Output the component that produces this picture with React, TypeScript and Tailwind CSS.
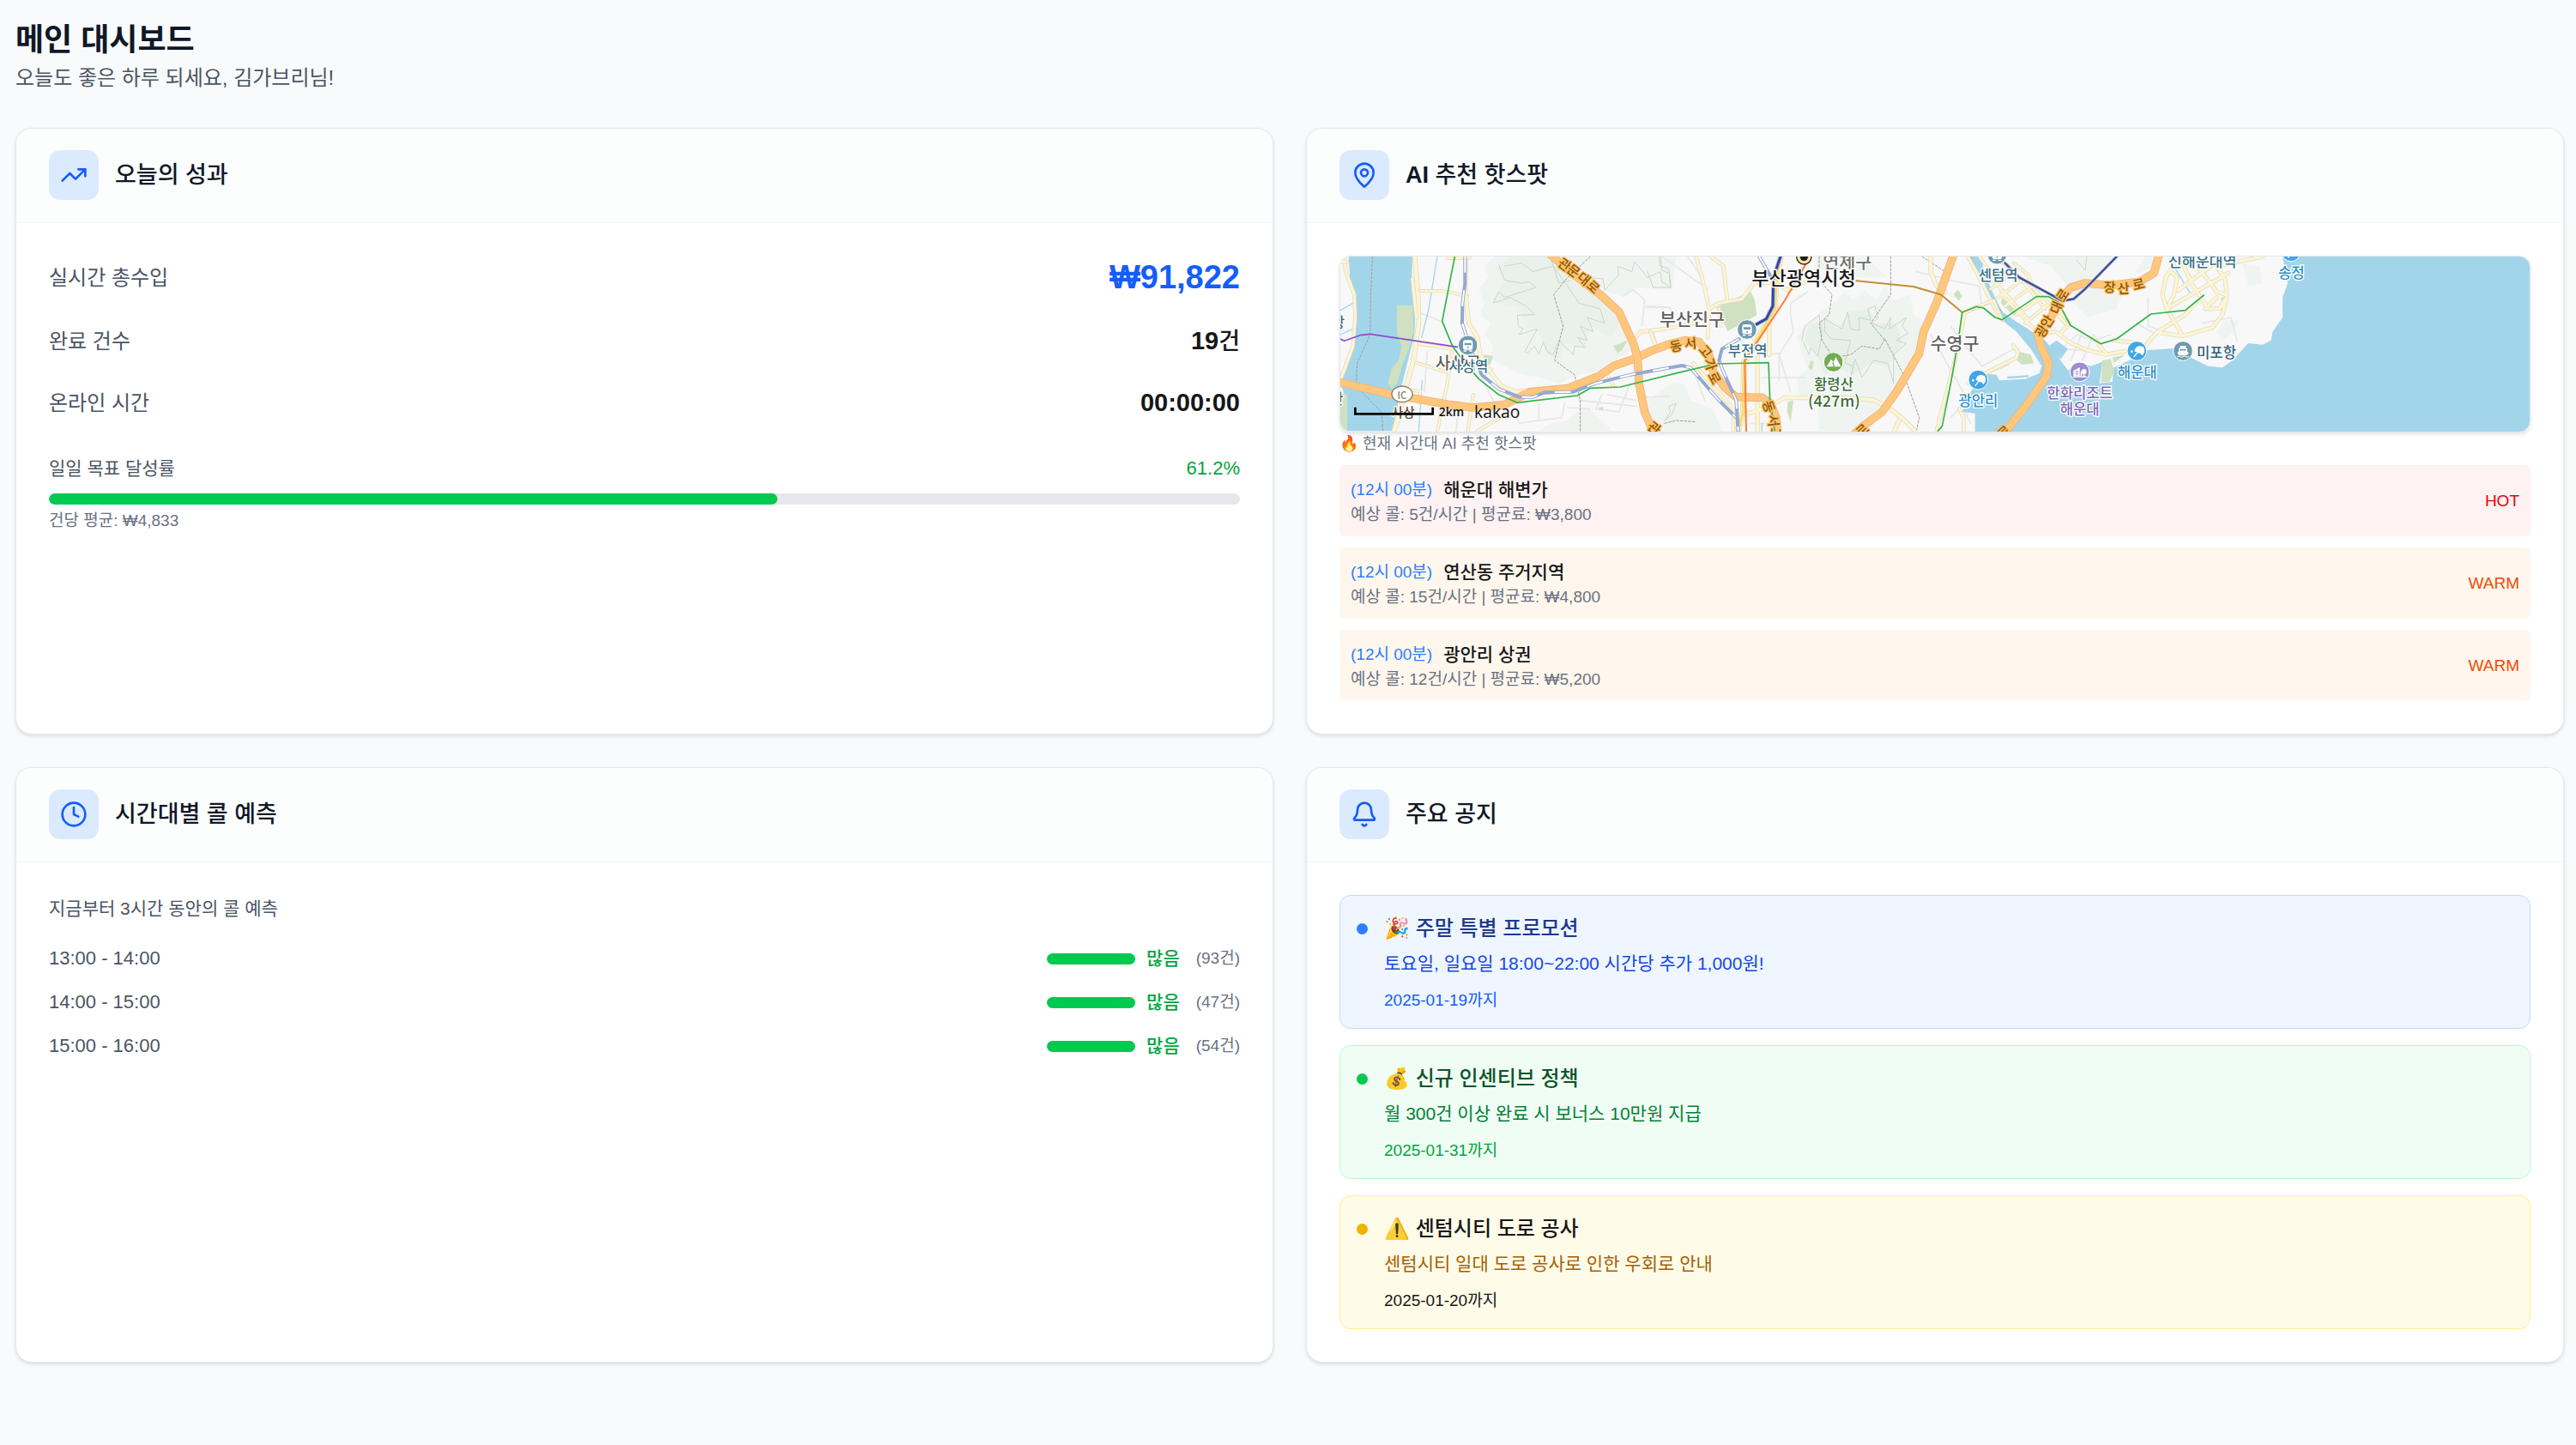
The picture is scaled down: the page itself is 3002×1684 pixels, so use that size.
import type { ReactNode } from "react";
import { Bell, Clock, MapPin, TrendingUp, type LucideIcon } from "lucide-react";

type CardProps = { icon: LucideIcon; title: ReactNode; children: ReactNode };

function Card({ icon: Icon, title, children }: CardProps) {
  return (
    <section className="flex flex-col overflow-hidden rounded-[19px] border border-gray-200 bg-white shadow-[0_2px_4px_rgba(0,0,0,0.12)]">
      <header className="flex items-center gap-[19px] border-b border-gray-100 bg-[#fcfefe] px-[38px] pt-[25px] pb-[26px]">
        <span className="flex size-[58px] items-center justify-center rounded-[13px] bg-blue-100 text-[#155dfc]">
          <Icon size={32} strokeWidth={2} aria-hidden="true" />
        </span>
        <h2 className="text-[27px] leading-[44px] font-medium text-[#101828]">{title}</h2>
      </header>
      <div className="flex-1 p-[38px]">{children}</div>
    </section>
  );
}

function Performance() {
  const percent = 61.2;
  return (
    <Card icon={TrendingUp} title="오늘의 성과">
      <dl className="flex flex-col gap-[26px] text-gray-600">
        <div className="flex items-center justify-between">
          <dt className="text-[24px] leading-[38px]">실시간 총수입</dt>
          <dd className="text-[38px] leading-[51px] font-bold text-[#155dfc]">₩91,822</dd>
        </div>
        <div className="flex items-center justify-between">
          <dt className="text-[24px] leading-[38px]">완료 건수</dt>
          <dd className="text-[29px] leading-[45px] font-semibold text-[#171717]">
            19<span className="text-[27px] font-medium">건</span>
          </dd>
        </div>
        <div className="flex items-center justify-between">
          <dt className="text-[24px] leading-[38px]">온라인 시간</dt>
          <dd className="text-[29px] leading-[45px] font-semibold text-[#171717]">00:00:00</dd>
        </div>
      </dl>
      <div className="mt-[38px] flex items-center justify-between leading-[32px]">
        <span id="goal" className="text-[21px] text-gray-600">일일 목표 달성률</span>
        <span className="text-[22px] text-[#00a63e]">61.2%</span>
      </div>
      <div
        role="progressbar"
        aria-labelledby="goal"
        aria-valuenow={percent}
        className="mt-[13px] h-[13px] overflow-hidden rounded-full bg-gray-200"
      >
        <div className="h-full rounded-full bg-[#00c950]" style={{ width: `${percent}%` }} />
      </div>
      <p className="mt-[6px] text-[19px] leading-[26px] text-gray-500">건당 평균: ₩4,833</p>
    </Card>
  );
}

type RoadProps = { d: string; w?: number };

function Road({ d, w = 12 }: RoadProps) {
  return (
    <>
      <path d={d} stroke="#ded8be" strokeWidth={w + 4} />
      <path d={d} stroke="#fdf4d3" strokeWidth={w} />
    </>
  );
}

function Highway({ d, w = 24 }: RoadProps) {
  return (
    <>
      <path d={d} stroke="#f0b184" strokeWidth={w + 5} />
      <path d={d} stroke="#ffc77c" strokeWidth={w} />
    </>
  );
}

function Rail({ d }: RoadProps) {
  return (
    <>
      <path d={d} stroke="#94a9d2" strokeWidth={12} />
      <path d={d} stroke="#ffffff" strokeWidth={6} strokeDasharray="56 62" strokeLinecap="butt" />
    </>
  );
}

type LabelProps = {
  x: number;
  y: number;
  size?: number;
  fill: string;
  halo?: string;
  rotate?: number;
  weight?: number;
  children: string;
};

function Label({ x, y, size = 50, fill, halo = "#ffffff", rotate = 0, weight = 500, children }: LabelProps) {
  return (
    <text
      x={x}
      y={y}
      fontSize={size}
      fill={fill}
      fontWeight={weight}
      stroke={halo}
      strokeWidth={8}
      strokeLinejoin="round"
      paintOrder="stroke"
      textAnchor="middle"
      dominantBaseline="central"
      transform={rotate ? `rotate(${rotate} ${x} ${y})` : undefined}
    >
      {children}
    </text>
  );
}

const roadNames: [string, number, number, number][] = [
  ["관", 852, 82, 36],
  ["문", 884, 104, 38],
  ["대", 920, 132, 40],
  ["로", 952, 160, 42],
  ["동", 1238, 366, -12],
  ["서", 1290, 356, -4],
  ["고", 1346, 386, 50],
  ["가", 1364, 432, 72],
  ["로", 1378, 480, 62],
  ["관", 1166, 654, 40],
  ["동", 1568, 580, 72],
  ["서", 1584, 630, 84],
  ["고", 1592, 676, 88],
  ["로", 1888, 662, -42],
  ["광", 2514, 316, -58],
  ["안", 2534, 282, -58],
  ["대", 2566, 234, -66],
  ["로", 2588, 190, -58],
  ["장", 2756, 160, 2],
  ["산", 2804, 164, -4],
  ["로", 2856, 150, -14],
  ["로", 2384, 668, -42],
];

function Pin({ x, y, fill, children }: { x: number; y: number; fill: string; children: ReactNode }) {
  return (
    <g transform={`translate(${x} ${y})`}>
      <circle r="34" fill={fill} stroke="#ffffff" strokeWidth="3" />
      {children}
    </g>
  );
}

function Train() {
  return (
    <>
      <path d="M-17-8q0-10 10-10H7q10 0 10 10V8q0 8-8 8H-9q-8 0-8-8Z" fill="#fff" />
      <path d="M-12-8H12V0H-12Z" fill="#7099ae" />
      <circle cy="8" r="3" fill="#7099ae" />
      <path d="M-14 20h8M6 20h8" stroke="#fff" strokeWidth="4" />
    </>
  );
}

function Parasol() {
  return (
    <>
      <path d="M-8 2C-8-14 6-22 22-14C30-4 26 10 18 16L10 6L6 10L4 4Z" fill="#fff" />
      <path d="M6 0L-10 20" stroke="#fff" strokeWidth="4" />
      <circle cx="-18" cy="2" r="4" fill="#fff" />
    </>
  );
}

function HotspotMap() {
  return (
    <svg
      viewBox="66 57 4158 612"
      preserveAspectRatio="xMidYMid slice"
      className="block h-[204px] w-full font-['Noto_Sans_CJK_KR',sans-serif]"
      role="img"
      aria-label="부산 핫스팟 지도"
      fill="none"
      strokeLinejoin="round"
      strokeLinecap="round"
    >
      <rect x="66" y="57" width="4158" height="612" fill="#f8f8f8" />

      {/* Hills and parks */}
      <g fill="#eff4f1">
        <path d="M605 57L570 90L585 130L550 170L570 220L555 260L590 290L570 330L600 370L590 410L640 440L700 470L760 480L830 500L900 470L960 460L1020 420L1080 390L1060 330L1030 260L980 200L920 150L860 100L800 57Z" />
        <path d="M840 57L900 110L1000 180L1060 200L1100 165L1180 170L1225 175L1240 57Z" />
        <path d="M760 667L800 640L850 635L890 600L940 590L990 640L1020 667Z" />
        <path d="M1140 57L1220 57L1225 170L1140 150Z" />
      </g>
      <path d="M660 57L610 100L640 140L600 215L690 235L720 300L760 320L790 400L830 420L850 360L920 370L940 300L1010 340L1040 290L1000 220L870 110L820 57Z" fill="#e9f1ea" />
      <g fill="#eff4f1" transform="translate(1140 0)">
        <path d="M0 57L60 57L85 170L40 175L0 120ZM0 560L80 500L130 500L150 560L230 590L260 667L20 667L0 620Z" />
        <path d="M660 210L690 180L720 210L760 175L800 210L830 160L860 210L920 190L930 260L960 280L950 390L900 470L860 540L820 560L800 620L600 640L590 560L530 540L520 480L560 450L540 390L520 340L560 290L620 240Z" />
        <path d="M590 60L760 57L840 130L740 130L650 110L590 100ZM600 600L700 590L790 640L780 667L600 667Z" />
      </g>
      <path d="M1700 300L1770 270L1800 310L1850 250L1920 240L1930 290L2010 290L2030 360L1980 440L1920 430L1860 470L1800 440L1760 470L1730 400L1690 350Z" fill="#e6f0e8" />
      <g fill="#eff4f1" transform="translate(2280 0)">
        <path d="M170 57L270 90L320 150L400 160L440 110L520 57ZM350 170L450 165L520 190L500 240L400 270L350 220ZM880 280L930 280L900 330L870 350L850 320ZM940 80L1000 90L1010 150L960 160ZM600 57L640 57L620 100L560 120Z" />
      </g>
      <g stroke="#cdd5c8" strokeWidth="3">
        <path d="M620 85L640 140L700 150L725 145L750 165L640 200L620 180L600 220L660 200L715 230L745 260L685 262L688 300L705 310L690 330L755 310L710 390L720 395L745 370L760 400L775 355L790 390L810 400L830 350L880 400L885 370L920 375L895 340L930 350L905 300L950 320L930 270L990 290L975 240L900 220L860 160L810 90L740 110L700 80L640 90" />
        <path d="M915 130L985 135L990 175L1040 120L1035 90L1085 110L1095 75L1140 130L1185 110L1190 145L1222 165L1215 100L1185 90L1180 57M800 57L830 150L870 140" />
        <path d="M1140 110L1160 165L1220 165L1215 115L1190 105L1185 57" />
        <path d="M1740 262L1690 300L1680 345L1705 400L1710 375L1735 405L1750 330L1740 262ZM1760 275L1820 310L1840 250L1850 310L1880 315L1880 270L1920 280L1910 240L1935 230L1945 270L1925 290L1970 310L1990 270L1985 310L2045 270L2030 300L2050 325L2010 350L2045 360L2000 400L2000 500L1980 430L1930 420L1890 480L1865 415L1845 500L1860 440L1830 430L1850 350L1780 345L1760 320Z" />
        <path d="M1200 630L1220 600L1215 580L1240 570L1225 610L1200 630M2640 70L2670 105L2675 57" />
      </g>

      {/* Minor streets */}
      <g stroke="#e6e6e8" strokeWidth="5">
        <path d="M350 255L420 285M370 390L360 530M480 580L470 667M600 450L560 480L600 560M760 575L760 630L840 620L850 570M680 590L690 640L760 630M980 540L960 590L1040 600L1080 500M1000 540L1100 560M940 590L860 585M1120 550L1220 545M1060 190L1090 172L1130 210L1120 300M1130 235L1220 235M900 530L900 560L1100 580" />
        <path d="M1140 230L1220 235L1220 290M1190 57L1350 170M1280 57L1330 130M1310 480L1340 560M1450 400L1480 330M1540 400L1600 395L1600 490M1540 480L1690 480M1500 640L1560 640M1640 260L1640 220L1700 180M1640 260L1650 320L1600 400L1640 530" />
        <path d="M2080 110L2200 140L2300 160L2310 240M2200 300L2260 380L2310 440L2420 380M2130 330L2260 560L2200 620M2270 640L2240 580M2560 410L2640 330L2700 350L2760 330M2890 200L2890 300L2980 330M3080 290L3180 270L3200 350M3180 90L3280 57" />
        <path d="M2600 380L2700 390M2620 420L2660 320M2660 420L2700 330M2850 290L2920 330" />
      </g>

      {/* Water */}
      <g fill="#a3d5ea">
        <path d="M95 57H318L316 130L328 250L325 330L300 430L278 520L262 600L245 667H90L88 560L66 500L105 400L122 290V210L100 140Z" />
        <g transform="translate(2280 0)">
          <path d="M-10 57H25L40 120L70 190L100 250L150 285L190 310L250 350L290 400L330 455L375 430L410 440L450 425L440 500L485 495L490 445L545 420L600 385L700 378L760 410L820 440L870 445L905 420L960 360L1010 365L1040 350L1045 320L1080 270L1080 200L1098 150L1080 57H1960V680H5V605L-40 600L-10 530L25 465L80 470L90 490L180 485L230 465L238 440L200 380L150 320L100 280L60 220L30 150L0 90Z" />
          <path d="M290 350L330 380L305 415L255 375Z" />
        </g>
      </g>
      <g fill="#cfe1c1">
        <path d="M263 228H318L322 320L305 380L285 430L265 500L245 517L232 500L245 450L270 420L280 370L265 330ZM66 530L90 540V667H66ZM1020 370L1070 350L1050 385L1035 395ZM570 400L600 405L590 435L560 430ZM970 585L985 582V594H972Z" />
        <path d="M1380 235L1500 178L1515 210L1522 262L1420 318ZM1630 565L1650 560L1640 635L1628 600ZM1710 420L1722 425L1715 455L1702 445ZM2210 190L2225 173L2240 195L2228 212Z" />
        <path d="M2440 390L2480 400L2490 430L2450 435L2430 420ZM2730 420L2760 415L2772 460L2755 495L2725 497ZM2765 410L2810 400L2770 430ZM3145 200L3160 198L3162 215L3147 216ZM2380 200L2430 250L2420 265L2375 220Z" />
      </g>
      <g stroke="#a3d5ea" strokeWidth="4">
        <path d="M405 57L375 240L350 340M352 490L340 667M2980 90L3040 190M66 245L110 220M66 330L110 310M1540 640V667" />
      </g>
      <path d="M2400 480L2470 475M2420 490L2460 497L2490 480" stroke="#a3d5ea" strokeWidth="7" />

      {/* Boundaries */}
      <g stroke="#a59c94" strokeWidth="3" strokeDasharray="8 6">
        <path d="M178 57L172 200L170 330L125 430L122 500L150 540L210 600L215 667" />
        <path d="M940 57L860 130L812 190L845 300L815 420L885 470L905 560V667M1200 640L1240 630L1310 635" />
        <path d="M1740 57V140L1785 190L1775 260L1740 290L1750 350L1790 410L1850 400L1890 370L1950 380L1970 345L2040 480L2090 620L2080 667M1990 57L1990 190L1920 290L1970 350M2270 57L2330 200L2380 250M2100 57L2180 110" />
      </g>

      {/* Yellow roads */}
      <Road d="M80 57L85 110L115 190L118 270L110 370L66 490" w={10} />
      <Road d="M326 57L338 200L340 290L322 420L300 500L285 560L262 640L255 667" w={14} />
      <Road d="M318 135L332 270M66 75L90 75" w={10} />
      <Road d="M345 177L430 178L510 195M440 62L518 62M340 362L460 380M330 428L440 462M457 380L440 500L405 667M530 540L512 667M640 612L545 667M290 522L345 527V570M1000 470L1020 510" w={8} />
      <Road d="M505 57L503 180L515 290L545 340L555 400L590 460L630 510L680 530L720 525" />
      <Road d="M1100 340L1115 320L1200 310L1300 290M1155 325L1170 370" w={10} />
      <g transform="translate(1140 0)">
        <Road d="M170 57L200 170L215 240L210 340M222 57L265 90L278 205M215 240L250 220L330 205L375 148L450 150L490 175L560 142M10 320L30 370M250 240L255 300M160 430L300 590V667" w={10} />
        <Road d="M425 250L425 400M385 410V667M340 610L430 580L480 550L700 552L790 558L850 590L900 630L935 667M880 630L862 667M990 57V110L1010 160L1040 180" w={12} />
        <Road d="M465 57L448 150L445 240L338 425L335 600L315 667" w={18} />
        <path d="M465 57L448 150L445 240L338 425L335 600L315 667" stroke="#f8dc80" strokeWidth="12" />
        <Road d="M1120 57L1160 130L1230 270M1200 215L1110 252L1080 400L1010 667M1120 500L1180 465L1260 430M1090 590L1105 620V667" w={10} />
      </g>
      <g transform="translate(2280 0)">
        <Road d="M20 57L60 110L110 200L200 300L240 330M95 70L170 140L250 240M140 80L190 120L210 170L330 280M60 170L130 120M85 200L170 140M110 230L200 165M150 260L240 200M180 290L260 225M60 130L190 275M-10 240L70 210L100 280" w={8} />
        <Road d="M40 465L150 410L155 390L138 368M240 330L285 318L340 360L400 385L460 400L545 385M335 290L300 330M285 250L320 290M420 340L465 400M490 350L560 358" w={10} />
        <Road d="M1010 57L900 80L860 92M700 85L672 130L660 190L675 240M690 110L712 130L700 190L675 240M730 80L765 155L820 240L860 238L885 200L880 140L845 80M675 240L760 190L830 150L890 115M715 175L830 90M790 100L850 180L880 190M810 240L850 200M885 200L870 260L835 305L730 335L640 322L600 370L570 385M730 335L700 280L675 240M640 322L740 260L780 215" w={11} />
      </g>

      {/* Expressways */}
      <Highway d="M66 497L250 540L450 575L530 585L640 575L700 545L730 530L860 518L970 475L1020 440L1100 412L1150 388L1210 365L1270 350L1320 355L1355 400L1370 460L1410 515L1450 548L1540 550L1570 570L1590 620L1595 680" />
      <Highway d="M795 45L870 110L975 190L1040 250L1090 360L1105 410L1110 500L1130 600L1165 680" />
      <Highway d="M2212 45L2150 220L2105 320L2090 395L2010 530L1960 600L1900 645L1860 680" />
      <Highway d="M2930 45L2910 115L2860 145L2760 158L2670 150L2620 165L2580 210L2550 270L2505 330L2515 370L2542 430L2535 475L2470 570L2390 670" />

      {/* Rail and metro lines */}
      <Rail d="M502 57V150L493 220L492 290L505 330L530 400L560 470L620 520L690 548L740 548L780 532L880 530L960 500L1080 470L1260 438L1290 445L1320 480L1390 560L1450 620" />
      <Rail d="M1530 57L1570 125M1460 345L1400 380L1390 420L1405 460L1450 560L1457 667" />
      <path d="M466 57L422 283L458 370L490 415L550 485L620 540L685 568L895 543L940 517L1045 513L1260 460L1380 432L1563 428L1568 560L1585 667" stroke="#33b548" strokeWidth="5" />
      <path d="M66 345L80 352L135 332L170 328L475 373" stroke="#8a4fc9" strokeWidth="5" />
      <path d="M1605 57L1580 130L1578 230L1555 275L1510 300" stroke="#9aa4cc" strokeWidth="13" />
      <path d="M1605 57L1580 130L1578 230L1555 275L1510 300" stroke="#2b44a6" strokeWidth="8" />
      <path d="M1695 80L1620 210L1480 420L1485 667" stroke="#ff7d33" strokeWidth="6" />
      <path d="M1870 142L2070 162L2165 190L2240 252" stroke="#c09038" strokeWidth="6" />
      <path d="M2155 667L2170 650L2200 500L2225 360L2240 252L2290 232L2315 237L2355 270L2380 278L2500 197L2542 197L2575 215L2618 297L2725 362L2780 345L2900 258L3020 245L3085 192" stroke="#33b548" strokeWidth="5" />
      <path d="M2390 80L2440 130L2590 212L2630 205L2670 170L2780 57" stroke="#b8b8bd" strokeWidth="11" />
      <path d="M2390 80L2440 130L2590 212L2630 205L2670 170L2780 57" stroke="#2f479f" strokeWidth="6" />

      {roadNames.map(([char, x, y, rotate], i) => (
        <Label key={i} x={x} y={y} size={46} fill="#8a5512" halo="#ffc25e" rotate={rotate}>
          {char}
        </Label>
      ))}

      {/* Places */}
      <Label x={478} y={426} size={58} fill="#5f5f5f">사상구</Label>
      <Pin x={512} y={367} fill="#7099ae"><Train /></Pin>
      <Label x={514} y={438} fill="#3a6f87">사상역</Label>
      <Label x={58} y={284} fill="#3a6f87">강</Label>
      <Label x={54} y={552} fill="#6b5a3c">산</Label>
      <ellipse cx="282" cy="538" rx="36" ry="28" fill="#fff" stroke="#8d7f66" strokeWidth="4" />
      <Label x={282} y={539} size={34} fill="#8d7f66">IC</Label>
      <Label x={286} y={598} size={44} fill="#5c4a30">사상</Label>

      <Label x={1296} y={272} size={62} fill="#5f5f5f">부산진구</Label>
      <Pin x={1488} y={312} fill="#7099ae"><Train /></Pin>
      <Label x={1490} y={384} fill="#3a6f87">부전역</Label>
      <Label x={1838} y={72} size={62} fill="#707070">연제구</Label>
      <circle cx="1687" cy="58" r="26" fill="#ffe0a0" stroke="#2c2c2c" strokeWidth="4" />
      <circle cx="1687" cy="58" r="14" fill="#1c1c1c" />
      <Label x={1686} y={126} size={66} fill="#171717">부산광역시청</Label>
      <Pin x={1790} y={426} fill="#72ad52">
        <path d="M-24 16L-8-10L0 0L8-18L26 16Z" fill="#fff" />
        <path d="M-2 2L2 14" stroke="#72ad52" strokeWidth="4" />
      </Pin>
      <Label x={1791} y={500} fill="#3c6b35">황령산</Label>
      <Label x={1792} y={558} size={54} fill="#3c6b35">(427m)</Label>
      <Label x={2214} y={357} size={62} fill="#5f5f5f">수영구</Label>
      <Pin x={2296} y={488} fill="#3fa7e6"><Parasol /></Pin>
      <Label x={2296} y={558} fill="#2b8fcb">광안리</Label>

      <Pin x={2362} y={50} fill="#7099ae"><Train /></Pin>
      <Label x={2366} y={120} fill="#3a6f87">센텀역</Label>
      <Label x={3080} y={70} size={52} fill="#3a6f87">신해운대역</Label>
      <Pin x={3390} y={40} fill="#3fa7e6"><Parasol /></Pin>
      <Label x={3391} y={110} fill="#2b8fcb">송정</Label>
      <Pin x={2851} y={387} fill="#3fa7e6"><Parasol /></Pin>
      <Label x={2852} y={458} fill="#2b8fcb">해운대</Label>
      <Pin x={3012} y={387} fill="#7099ae">
        <path d="M-10-18H10V-10H15V2L20 6L14 16H-14L-20 6L-15 2V-10H-10Z" fill="#fff" />
        <path d="M-9-4H9" stroke="#7099ae" strokeWidth="5" />
        <path d="M-20 20q5-4 10 0t10 0t10 0t10 0" stroke="#fff" strokeWidth="3" />
      </Pin>
      <Label x={3129} y={389} fill="#35617a">미포항</Label>
      <Pin x={2651} y={460} fill="#9b8dd0">
        <path d="M-22 14V-4L0-16V14ZM3 14V-2H8V14Z" fill="#fff" />
        <path d="M-16 0H-4M-16 7H-4M-10-8V14" stroke="#9b8dd0" strokeWidth="2" />
        <circle cx="15" cy="-1" r="9" fill="#fff" />
        <path d="M15 2V14M-22 17H22" stroke="#fff" strokeWidth="4" />
      </Pin>
      <Label x={2651} y={530} fill="#7a68bb">한화리조트</Label>
      <Label x={2651} y={588} fill="#7a68bb">해운대</Label>

      {/* Scale and attribution */}
      <path d="M118 584V607H389V584" stroke="#000" strokeWidth="8" strokeLinecap="butt" strokeLinejoin="miter" />
      <text x="410" y="616" fontSize="42" fontWeight="600" fill="#111" className="font-['Open_Sans',sans-serif]">2km</text>
      <text x="534" y="620" fontSize="58" fontWeight="500" fill="#111" className="font-['Open_Sans',sans-serif]">kakao</text>
    </svg>
  );
}

const hotspots = [
  { time: "(12시 00분)", name: "해운대 해변가", detail: "예상 콜: 5건/시간 | 평균료: ₩3,800", level: "HOT", box: "bg-red-50", tag: "text-[#e7000b]" },
  { time: "(12시 00분)", name: "연산동 주거지역", detail: "예상 콜: 15건/시간 | 평균료: ₩4,800", level: "WARM", box: "bg-orange-50", tag: "text-[#f54900]" },
  { time: "(12시 00분)", name: "광안리 상권", detail: "예상 콜: 12건/시간 | 평균료: ₩5,200", level: "WARM", box: "bg-orange-50", tag: "text-[#f54900]" },
];

function Hotspots() {
  return (
    <Card icon={MapPin} title={<><span className="font-bold">AI</span> 추천 핫스팟</>}>
      <div className="overflow-hidden rounded-[13px] border border-gray-200 shadow-[0_2px_4px_rgba(0,0,0,0.12)]">
        <HotspotMap />
      </div>
      <p className="text-[18px] leading-[26px] text-gray-500">🔥 현재 시간대 AI 추천 핫스팟</p>
      <ul className="mt-[12px] flex flex-col gap-[13px]">
        {hotspots.map((spot) => (
          <li key={spot.name} className={`flex items-center justify-between rounded-[6px] p-[13px] ${spot.box}`}>
            <div>
              <p className="flex items-center gap-[13px] leading-[32px]">
                <span className="text-[19px] text-[#2b7fff]">{spot.time}</span>
                <span className="text-[21px] font-medium text-[#171717]">{spot.name}</span>
              </p>
              <p className="text-[19px] leading-[25px] text-gray-500">{spot.detail}</p>
            </div>
            <span className={`text-[19px] leading-[26px] ${spot.tag}`}>{spot.level}</span>
          </li>
        ))}
      </ul>
    </Card>
  );
}

const forecasts = [
  { range: "13:00 - 14:00", count: "(93건)" },
  { range: "14:00 - 15:00", count: "(47건)" },
  { range: "15:00 - 16:00", count: "(54건)" },
];

function Forecast() {
  return (
    <Card icon={Clock} title="시간대별 콜 예측">
      <p className="mb-[26px] text-[21px] leading-[32px] text-gray-600">지금부터 3시간 동안의 콜 예측</p>
      <ul className="flex flex-col gap-[19px]">
        {forecasts.map((slot) => (
          <li key={slot.range} className="flex items-center justify-between leading-[32px]">
            <span className="text-[22px] text-gray-600">{slot.range}</span>
            <span className="flex items-center">
              <span className="mr-[13px] h-[13px] w-[103px] rounded-full bg-[#00c950]" />
              <span className="mr-[19px] text-[21px] font-medium text-[#00a63e]">많음</span>
              <span className="text-[19px] text-gray-500">{slot.count}</span>
            </span>
          </li>
        ))}
      </ul>
    </Card>
  );
}

const notices = [
  {
    title: "🎉 주말 특별 프로모션",
    body: "토요일, 일요일 18:00~22:00 시간당 추가 1,000원!",
    until: "2025-01-19까지",
    box: "border-blue-200 bg-blue-50",
    dot: "bg-[#2b7fff]",
    titleColor: "text-[#1c398e]",
    bodyColor: "text-[#1447e6]",
    untilColor: "text-[#155dfc]",
  },
  {
    title: "💰 신규 인센티브 정책",
    body: "월 300건 이상 완료 시 보너스 10만원 지급",
    until: "2025-01-31까지",
    box: "border-green-200 bg-green-50",
    dot: "bg-[#00c950]",
    titleColor: "text-[#0d542b]",
    bodyColor: "text-[#008236]",
    untilColor: "text-[#00a63e]",
  },
  {
    title: "⚠️ 센텀시티 도로 공사",
    body: "센텀시티 일대 도로 공사로 인한 우회로 안내",
    until: "2025-01-20까지",
    box: "border-[#fff085] bg-[#fefbe8]",
    dot: "bg-[#f0b100]",
    titleColor: "text-[#171717]",
    bodyColor: "text-[#a65f00]",
    untilColor: "text-[#171717]",
  },
];

function Notices() {
  return (
    <Card icon={Bell} title="주요 공지">
      <ul className="flex flex-col gap-[19px]">
        {notices.map((notice) => (
          <li key={notice.title} className={`flex gap-[19px] rounded-[13px] border p-[19px] ${notice.box}`}>
            <span className={`mt-[13px] size-[13px] shrink-0 rounded-full ${notice.dot}`} />
            <div>
              <h3 className={`text-[24px] leading-[38px] font-medium ${notice.titleColor}`}>{notice.title}</h3>
              <p className={`mt-[6px] text-[21px] leading-[32px] ${notice.bodyColor}`}>{notice.body}</p>
              <p className={`mt-[14px] text-[19px] leading-[26px] ${notice.untilColor}`}>{notice.until}</p>
            </div>
          </li>
        ))}
      </ul>
    </Card>
  );
}

export default function App() {
  return (
    <main className="min-h-screen bg-gray-50 pt-[21px] pr-[14px] pb-[38px] pl-[18px] font-['Liberation_Sans','Noto_Sans_CJK_KR',sans-serif]">
      <div className="mb-[39px]">
        <h1 className="text-[36px] leading-[51px] font-bold text-[#101828]">메인 대시보드</h1>
        <p className="text-[24px] leading-[38px] text-gray-600">오늘도 좋은 하루 되세요, 김가브리님!</p>
      </div>
      <div className="grid grid-cols-2 gap-[38px]">
        <Performance />
        <Hotspots />
        <Forecast />
        <Notices />
      </div>
    </main>
  );
}
